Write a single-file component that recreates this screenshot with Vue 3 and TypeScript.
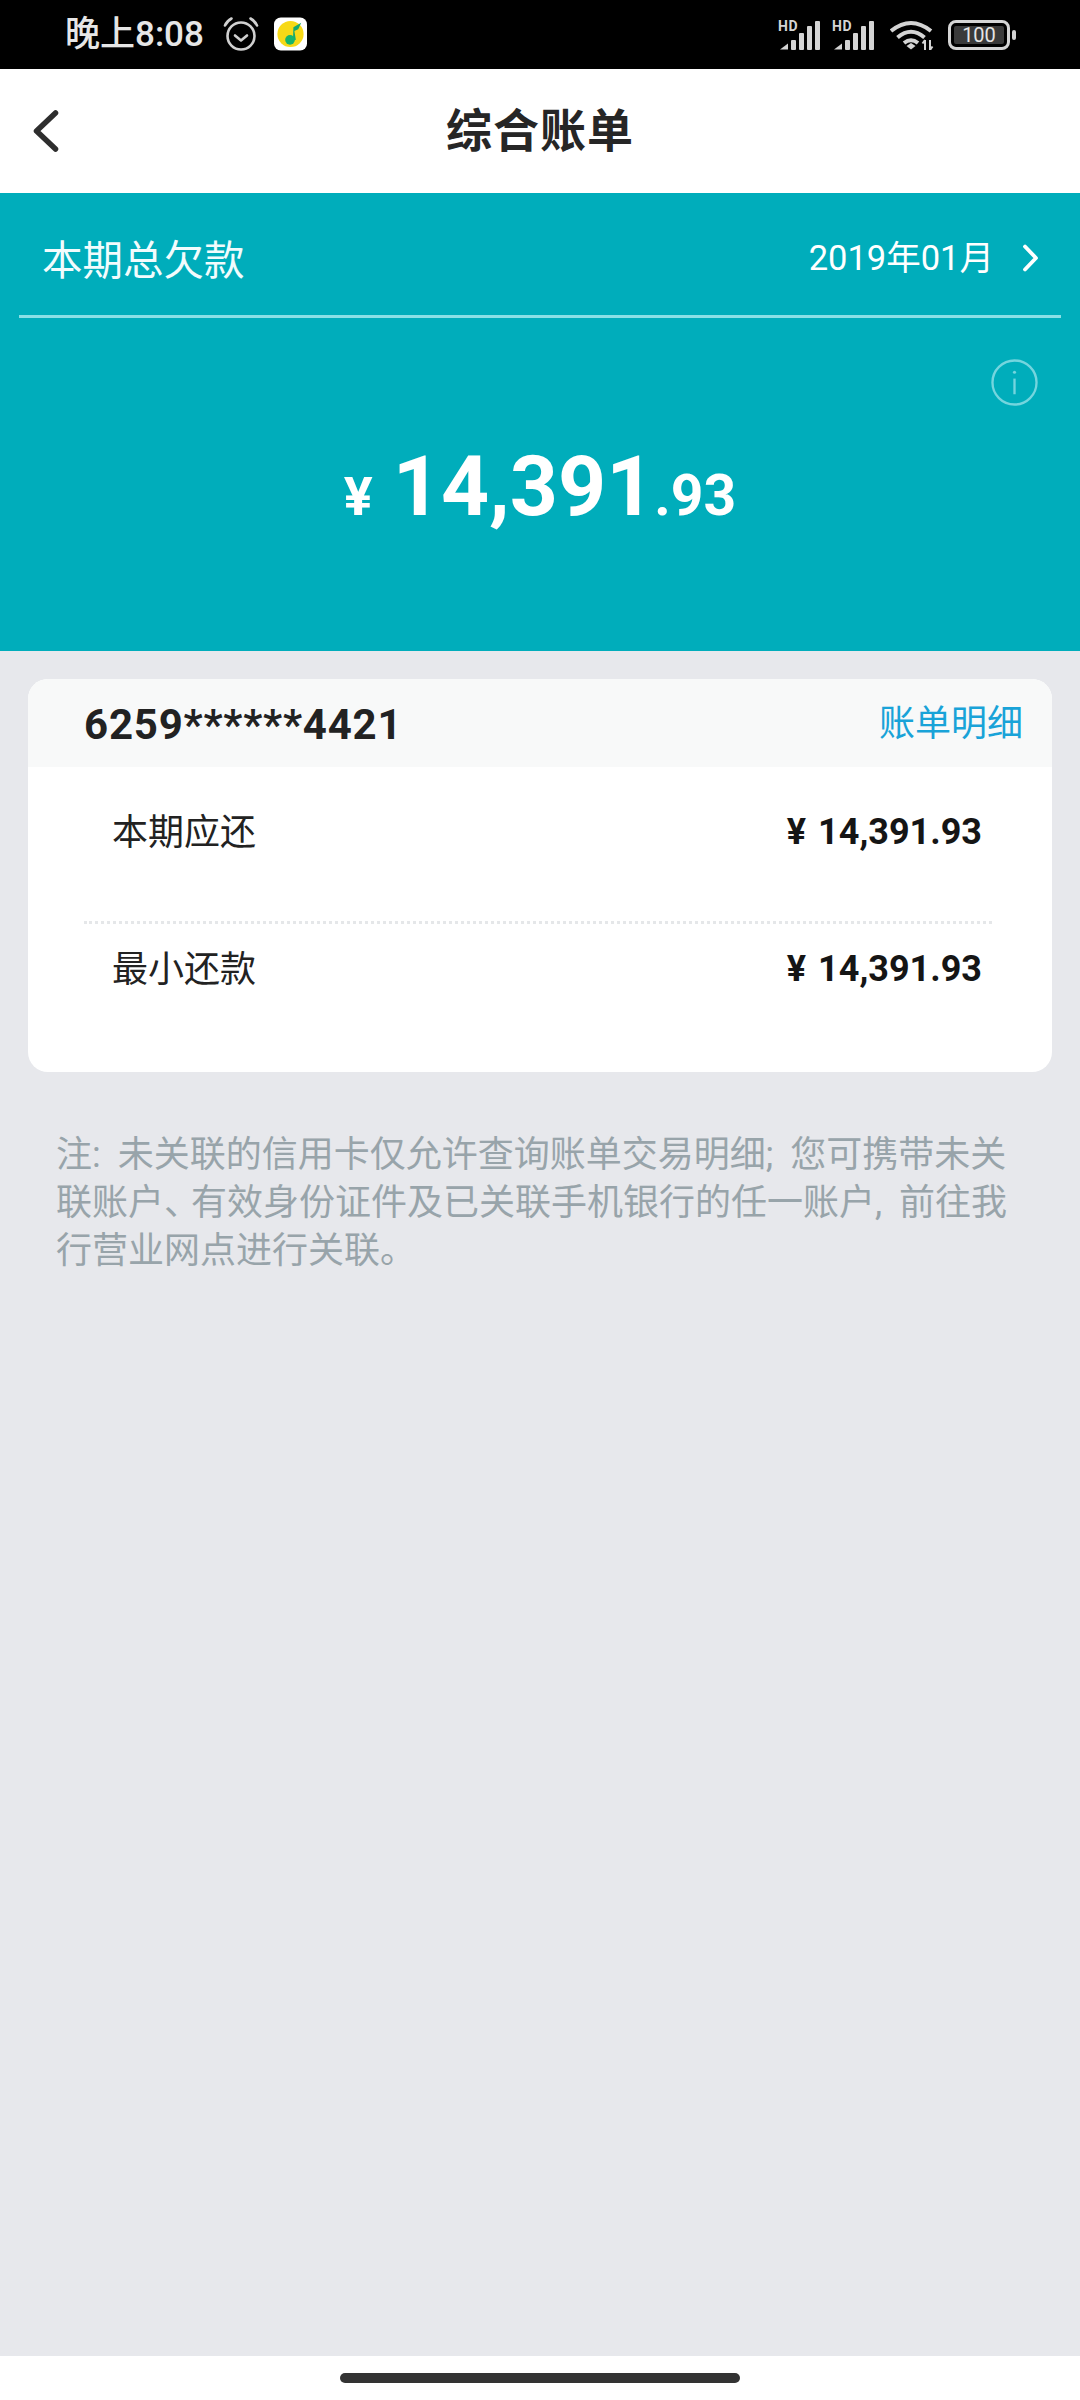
<script setup lang="ts">
const rows = [
  { label: '本期应还', value: '14,391.93' },
  { label: '最小还款', value: '14,391.93' }
]
const bars = [10, 17, 24, 29]
</script>

<template>
  <div class="page">
    <div class="status">
      <div class="status-left">
        <span class="clock">晚上8:08</span>
        <svg class="alarm" viewBox="0 0 36 36" width="36" height="36" fill="none" stroke="#d0d0d0" stroke-width="2.6" stroke-linecap="round" stroke-linejoin="round">
          <circle cx="18" cy="20" r="13.500" />
          <path d="M12 19.500l6 5 6-5" />
          <path d="M2 9.500Q4 5 8.500 2.500M34 9.500Q32 5 27.500 2.500" />
        </svg>
        <svg class="music" viewBox="0 0 34 34" width="33" height="34">
          <rect width="34" height="34" rx="7" fill="#fff" />
          <circle cx="17" cy="17" r="13.500" fill="#f7d917" />
          <path d="M20 10l8-4.500-3 6.500-4 2 1.500 9-3 1z" fill="#14a870" />
          <circle cx="16.500" cy="23" r="5" fill="#17b46b" />
        </svg>
      </div>
      <div class="status-right">
        <div v-for="n in 2" :key="n" class="signal">
          <span class="hd">HD</span>
          <svg viewBox="0 0 41 29" width="41" height="29" fill="#d4d4d4">
            <path d="M1 28.500l8-6v6z" />
            <rect v-for="(h, i) in bars" :key="i" :x="12 + i * 8" :y="29 - h" width="5" :height="h" rx="1" />
          </svg>
        </div>
        <svg class="wifi" viewBox="0 0 44 30" width="44" height="30" fill="none" stroke="#d4d4d4" stroke-width="4">
          <path d="M1 11Q21-5 41 11" />
          <path d="M7.500 17.500Q21 6 34.500 17.500" />
          <path d="M14 23Q21 17.500 28 23" />
          <path d="M16.500 26L21 23l4.500 3-4.500 3.500z" fill="#d4d4d4" stroke="none" />
          <path d="M35 20v10M35 20l-2.500 3.500M40 20v10M40 30l2.500-3.500" stroke-width="2" />
        </svg>
        <div class="battery">
          <div class="battery-body"><span class="battery-fill">100</span></div>
          <i class="battery-tip"></i>
        </div>
      </div>
    </div>

    <header class="nav">
      <svg class="back" viewBox="0 0 26 42" width="26" height="42" fill="none" stroke="#2e2e2e" stroke-width="5.500" stroke-linecap="round" stroke-linejoin="round">
        <path d="M22.500 3L3.500 21l19 18" />
      </svg>
      <h1 class="title">综合账单</h1>
    </header>

    <section class="summary">
      <div class="summary-top">
        <span class="summary-label">本期总欠款</span>
        <div class="period">
          <span>2019年01月</span>
          <svg viewBox="0 0 18 28" width="18" height="28" fill="none" stroke="#fff" stroke-width="3.800" stroke-linecap="round" stroke-linejoin="round">
            <path d="M3 2.500l11 11.500-11 11.500" />
          </svg>
        </div>
      </div>
      <div class="info-row">
        <svg viewBox="0 0 48 48" width="47" height="47" fill="none" stroke="#74d5de" stroke-width="2.400">
          <circle cx="24" cy="24" r="22.500" />
          <path d="M24 20v16" />
          <circle cx="24" cy="13.500" r="1.600" fill="#74d5de" stroke="none" />
        </svg>
      </div>
      <div class="amount">
        <span class="yen">¥</span><span class="int">14,391</span><span class="dec">.93</span>
      </div>
    </section>

    <main class="content">
      <div class="card">
        <div class="card-head">
          <span class="card-no">6259******4421</span>
          <span class="card-link">账单明细</span>
        </div>
        <div class="card-body">
          <div v-for="(row, i) in rows" :key="row.label" class="row" :class="{ first: i === 0 }">
            <span class="row-label">{{ row.label }}</span>
            <span class="row-value"><span class="row-yen">¥</span>{{ row.value }}</span>
          </div>
        </div>
      </div>
      <div class="note">
        <p>注: 未关联的信用卡仅允许查询账单交易明细; 您可携带未关</p>
        <p>联账户<span class="tight">、</span>有效身份证件及已关联手机银行的任一账户, 前往我</p>
        <p>行营业网点进行关联。</p>
      </div>
    </main>

    <footer class="gesture"><i class="home-bar"></i></footer>
  </div>
</template>

<style>
html, body { margin: 0; padding: 0; background: #e7e8ec; }
</style>

<style scoped>
.page {
  width: 1080px;
  height: 2400px;
  display: flex;
  flex-direction: column;
  background: #e7e8ec;
  font-family: "Roboto", "Noto Sans CJK SC", sans-serif;
  overflow: hidden;
}
.status {
  height: 69px;
  flex: none;
  background: #000;
  display: flex;
  justify-content: space-between;
  align-items: center;
  padding: 0 64px 0 65px;
  box-sizing: border-box;
}
.status-left { display: flex; align-items: center; }
.clock { color: #e6e6e6; font-size: 35px; font-weight: 500; line-height: 40px; width: 158px; white-space: nowrap; }
.alarm { margin-top: -2px; }
.music { margin-left: 15px; margin-top: -2px; }
.status-right { display: flex; align-items: center; }
.signal { position: relative; width: 41px; height: 29px; margin-right: 13px; display: flex; align-items: flex-end; margin-top: 1px; }
.hd { position: absolute; left: -1px; top: -1px; color: #d4d4d4; font-size: 14px; font-weight: 700; line-height: 12px; letter-spacing: 0.5px; }
.wifi { margin-left: 3px; margin-top: 1px; }
.battery { display: flex; align-items: center; margin-left: 14px; }
.battery-body {
  width: 62px; height: 30px; box-sizing: border-box;
  border: 3px solid #d4d4d4; border-radius: 8px; padding: 3px;
  display: flex;
}
.battery-fill {
  flex: 1; background: #3a3a3a; border-radius: 2px; color: #e6e6e6;
  font-size: 20px; line-height: 18px; text-align: center; font-family: "Roboto", sans-serif;
}
.battery-tip { width: 4px; height: 10px; background: #d4d4d4; border-radius: 2px; margin-left: 2px; }
.nav {
  height: 124px;
  flex: none;
  background: #fff;
  position: relative;
  display: flex;
  align-items: center;
  justify-content: center;
}
.back { position: absolute; left: 33px; top: 41px; }
.title { margin: 0; font-size: 46px; font-weight: 700; color: #262626; letter-spacing: 1px; line-height: 60px; }
.summary {
  height: 458px;
  flex: none;
  background: #00adbb;
  color: #fff;
  padding: 0 19px;
  box-sizing: border-box;
}
.summary-top {
  height: 125px;
  box-sizing: border-box;
  border-bottom: 3px solid #8ae0e6;
  display: flex;
  justify-content: space-between;
  align-items: center;
  padding: 0 21px 0 23px;
}
.summary-label { font-size: 40.500px; line-height: 50px; margin-top: 14px; color: #f2fcfd; }
.period { display: flex; align-items: center; font-size: 34.500px; line-height: 44px; margin-top: 8px; }
.period svg { margin-left: 28px; }
.info-row { display: flex; justify-content: flex-end; padding: 41px 23px 0 0; height: 47px; }
.amount {
  display: flex;
  align-items: baseline;
  justify-content: center;
  margin-top: 31px;
  line-height: 100px;
  font-weight: 700;
}
.yen { font-size: 54px; margin-right: 20px; }
.int { font-size: 84px; }
.dec { font-size: 57px; }
.content { flex: 1; padding: 28px 28px 0; box-sizing: border-box; }
.card { background: #fff; border-radius: 20px; overflow: hidden; height: 393px; }
.card-head {
  height: 88px;
  background: #f8f9f9;
  display: flex;
  justify-content: space-between;
  align-items: center;
  padding: 0 29px 0 56px;
}
.card-no { font-size: 42px; font-weight: 700; color: #222; letter-spacing: 0.800px; margin-top: 2px; }
.card-link { font-size: 36px; color: #19a3d8; margin-top: -6px; }
.card-body { padding: 0 60px 0 56px; }
.row {
  height: 84px;
  box-sizing: border-box;
  display: flex;
  justify-content: space-between;
  align-items: center;
  padding: 0 10px 0 28px;
}
.row.first { border-bottom: 3px dotted #e5e7e9; height: 157px; padding-bottom: 30px; }
.row-label { font-size: 36px; color: #222; }
.row-value { font-size: 36px; font-weight: 700; color: #151515; display: flex; align-items: baseline; margin-top: 6px; }
.row-yen { margin-right: 12px; font-size: 36px; }
.note {
  margin: 59px 0 0 28px;
  font-size: 36px;
  line-height: 48px;
  color: #98a4aa;
  word-spacing: 8px;
}
.note p { margin: 0; white-space: nowrap; }
.tight { letter-spacing: -9px; }
.gesture {
  height: 44px;
  flex: none;
  background: #fff;
  display: flex;
  justify-content: center;
  padding-top: 17px;
  box-sizing: border-box;
}
.home-bar { width: 400px; height: 10px; border-radius: 5px; background: #333; }
</style>
